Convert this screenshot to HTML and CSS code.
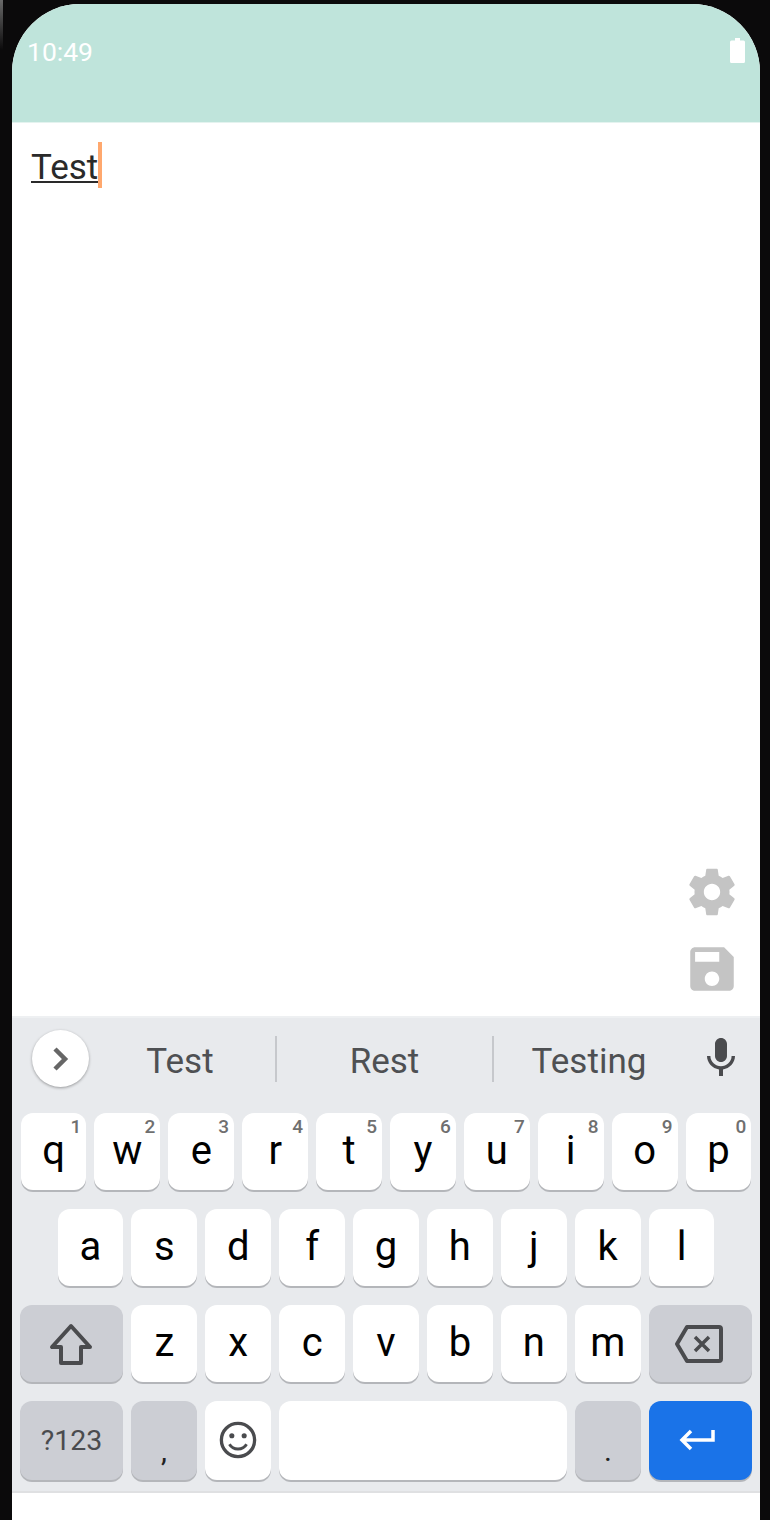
FILE: index.html
```html
<!DOCTYPE html>
<html lang="en">
<head>
    <meta charset="UTF-8">
    <meta name="viewport" content="width=device-width, initial-scale=1.0">
    <title>Note editor</title>
    <link rel="stylesheet" href="styles.css">
</head>
<body>
    <div class="screen">
        <div class="status">
            <span class="time">10:49</span>
            <svg class="battery" width="15" height="25" viewBox="0 0 15 25"><path d="M5 0h5v2.500h3.500a1.500 1.500 0 0 1 1.500 1.500v19.500a1.500 1.500 0 0 1-1.500 1.500h-12a1.500 1.500 0 0 1-1.500-1.500V4a1.500 1.500 0 0 1 1.500-1.500H5z" fill="#fff"/></svg>
        </div>

        <div class="editor">
            <div class="line"><span class="word">Test</span><span class="cursor"></span></div>
            <div class="tools">
                <svg class="tool" width="56" height="56" viewBox="0 0 24 24"><path fill="#c4c4c4" d="M19.43 12.98c.04-.32.07-.64.07-.98s-.03-.66-.07-.98l2.110-1.650c.19-.15.24-.42.12-.64l-2-3.460c-.12-.22-.39-.3-.61-.22l-2.490 1c-.52-.4-1.080-.73-1.690-.98l-.38-2.650C14.460 2.180 14.250 2 14 2h-4c-.25 0-.46.18-.49.42l-.38 2.650c-.61.25-1.170.59-1.690.98l-2.490-1c-.23-.09-.49 0-.61.22l-2 3.460c-.13.22-.07.49.12.64l2.110 1.650c-.04.32-.07.65-.07.98s.03.66.07.98l-2.110 1.650c-.19.15-.24.42-.12.64l2 3.460c.12.22.39.3.61.22l2.490-1c.52.4 1.080.73 1.690.98l.38 2.650c.03.24.24.42.49.42h4c.25 0 .46-.18.49-.42l.38-2.650c.61-.25 1.170-.59 1.690-.98l2.490 1c.23.09.49 0 .61-.22l2-3.460c.12-.22.07-.49-.12-.64l-2.110-1.650zM12 15.500c-1.930 0-3.500-1.570-3.500-3.500s1.570-3.500 3.500-3.500 3.500 1.570 3.500 3.500-1.570 3.500-3.500 3.500z"/></svg>
                <svg class="tool tool-save" width="58" height="58" viewBox="0 0 24 24"><path fill="#c4c4c4" d="M17 3H5c-1.110 0-2 .9-2 2v14c0 1.100.89 2 2 2h14c1.100 0 2-.9 2-2V7l-4-4zm-5 16c-1.660 0-3-1.340-3-3s1.340-3 3-3 3 1.340 3 3-1.340 3-3 3zm3-10H5V5h10v4z"/></svg>
            </div>
        </div>

        <div class="keyboard">
            <div class="strip">
                <div class="expand">
                    <svg width="18" height="26" viewBox="0 0 18 26"><path d="M3 3l10 10-10 10" fill="none" stroke="#666" stroke-width="4.500"/></svg>
                </div>
                <span class="sug sug-first">Test</span>
                <span class="sug sug-mid">Rest</span>
                <span class="sug sug-last">Testing</span>
                <svg class="mic" width="48" height="48" viewBox="0 0 24 24"><path fill="#4a4b4e" d="M12 14c1.660 0 2.990-1.340 2.990-3L15 5c0-1.660-1.340-3-3-3S9 3.340 9 5v6c0 1.660 1.340 3 3 3zm5.300-3c0 3-2.540 5.100-5.300 5.100S6.700 14 6.700 11H5c0 3.410 2.720 6.230 6 6.720V21h2v-3.280c3.280-.48 6-3.300 6-6.720h-1.700z"/></svg>
            </div>

            <div class="row">
                <div class="key">q<span class="hint">1</span></div>
                <div class="key">w<span class="hint">2</span></div>
                <div class="key">e<span class="hint">3</span></div>
                <div class="key">r<span class="hint">4</span></div>
                <div class="key">t<span class="hint">5</span></div>
                <div class="key">y<span class="hint">6</span></div>
                <div class="key">u<span class="hint">7</span></div>
                <div class="key">i<span class="hint">8</span></div>
                <div class="key">o<span class="hint">9</span></div>
                <div class="key">p<span class="hint">0</span></div>
            </div>

            <div class="row">
                <div class="key">a</div>
                <div class="key">s</div>
                <div class="key">d</div>
                <div class="key">f</div>
                <div class="key">g</div>
                <div class="key">h</div>
                <div class="key">j</div>
                <div class="key">k</div>
                <div class="key">l</div>
            </div>

            <div class="row">
                <div class="key wide grey shift">
                    <svg width="46" height="44" viewBox="0 0 46 44"><path d="M23 4L4 25h9v16h20V25h9z" fill="none" stroke="#4a4b4e" stroke-width="4" stroke-linejoin="round"/></svg>
                </div>
                <div class="key">z</div>
                <div class="key">x</div>
                <div class="key">c</div>
                <div class="key">v</div>
                <div class="key">b</div>
                <div class="key">n</div>
                <div class="key">m</div>
                <div class="key wide grey backspace">
                    <svg width="50" height="40" viewBox="0 0 50 40"><path d="M13 3h32a2 2 0 0 1 2 2v30a2 2 0 0 1-2 2H13L3 20z" fill="none" stroke="#4a4b4e" stroke-width="4" stroke-linejoin="round"/><path d="M21 13l14 14M35 13L21 27" fill="none" stroke="#4a4b4e" stroke-width="3.500"/></svg>
                </div>
            </div>

            <div class="row row-last">
                <div class="key wide grey symbols">?123</div>
                <div class="key grey punct">,</div>
                <div class="key emoji">
                    <svg width="38" height="38" viewBox="0 0 40 40"><circle cx="20" cy="20" r="17.500" fill="none" stroke="#4a4b4e" stroke-width="3.500"/><circle cx="13.500" cy="15.500" r="2.700" fill="#4a4b4e"/><circle cx="26.500" cy="15.500" r="2.700" fill="#4a4b4e"/><path d="M11 24.500c2 3.500 5 5 9 5s7-1.500 9-5" fill="none" stroke="#4a4b4e" stroke-width="3"/></svg>
                </div>
                <div class="key space"></div>
                <div class="key grey punct">.</div>
                <div class="key wide enter">
                    <svg width="40" height="26" viewBox="0 0 40 26"><path d="M36 2v10H5M14 3l-9 9 9 9" fill="none" stroke="#fff" stroke-width="3.500"/></svg>
                </div>
            </div>
        </div>
    </div>
</body>
</html>
```

FILE: styles.css
```css
html, body { margin: 0; height: 1520px; overflow: hidden; }
body { background: #0b0a0b linear-gradient(#6a6a6a, #0b0a0b) no-repeat 0 0 / 3px 50px; font-family: Roboto, "Noto Sans", sans-serif; }
.screen { margin: 4px 10px 0 12px; height: 1516px; background: #fff; border-radius: 68px 68px 0 0; overflow: hidden; display: flex; flex-direction: column; }

.status { height: 119px; flex: none; background: #bfe4db; border-bottom: 1px solid #e4f3ef; box-sizing: border-box; display: flex; justify-content: space-between; align-items: flex-start; padding: 31px 15px 0 15px; }
.time { color: #fff; font-size: 26.500px; line-height: 34px; }
.battery { margin-top: 3px; }

.editor { height: 893px; flex: none; display: flex; flex-direction: column; justify-content: space-between; box-sizing: border-box; padding: 19px 20px 18px 19px; }
.line { display: flex; align-items: flex-start; }
.word { color: #2a2a2a; font-size: 35px; line-height: 48px; margin-top: 2px; text-decoration: underline; text-decoration-thickness: 2px; text-underline-offset: 2px; }
.cursor { width: 4px; height: 46px; background: #ffa86e; }
.tools { display: flex; flex-direction: column; align-items: flex-end; gap: 20px; }
.tool-save { margin-right: -1px; }

.keyboard { height: 477px; flex: none; background: #e8eaed; border-top: 2px solid #eef0f2; border-bottom: 2px solid #dfe0e2; box-sizing: border-box; padding: 0 8px; }
.strip { height: 95px; display: flex; align-items: flex-start; padding: 12px 0 0 12px; box-sizing: border-box; }
.expand { width: 57px; height: 57px; flex: none; border-radius: 50%; background: #fff; box-shadow: 0 1px 3px rgba(0, 0, 0, 0.35); display: flex; align-items: center; justify-content: center; }
.sug { color: #4e5053; font-size: 35px; text-align: center; height: 46px; line-height: 52px; margin-top: 6px; }
.sug-first { width: 182px; padding-right: 4px; border-right: 2px solid #c6c8cc; }
.sug-mid { width: 215px; border-right: 2px solid #c6c8cc; }
.sug-last { width: 190px; }
.mic { margin: 4px 0 0 13px; }

.row { display: flex; justify-content: center; gap: 8.100px; height: 77px; margin-bottom: 19px; }
.row-last { height: 79px; margin-bottom: 0; }
.key { position: relative; width: 65.800px; flex: none; background: #fff; border-radius: 12px; box-shadow: 0 2px 0 #b4b6ba; color: #000; font-size: 40px; display: flex; align-items: center; justify-content: center; box-sizing: border-box; padding-bottom: 3px; }
.hint { position: absolute; top: 2px; right: 5px; color: #6f6f6f; font-size: 19px; font-weight: 500; line-height: 24px; }
.wide { width: 103px; }
.grey { background: #ccced4; }
.space { width: 288px; }
.shift { padding: 0 2px 0 0; }
.backspace { padding: 0 3px 0 0; }
.symbols { color: #4a4b4e; font-size: 28.500px; padding-bottom: 0; }
.punct { color: #222; font-size: 30px; padding-bottom: 0; padding-top: 20px; }
.emoji { padding-bottom: 2px; }
.enter { background: #1a73e8; padding: 0 7px 0 0; }
```
